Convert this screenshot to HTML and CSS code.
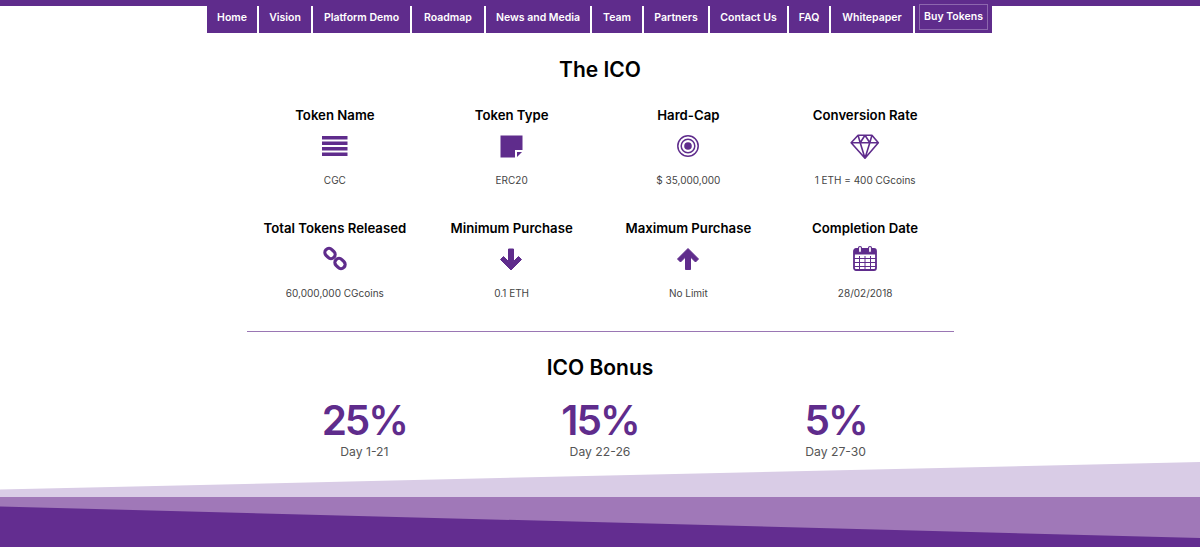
FILE: index.html
```html
<!DOCTYPE html>
<html lang="en">
  <head>
    <meta charset="UTF-8" />
    <meta name="viewport" content="width=device-width, initial-scale=1.0" />
    <title>The ICO</title>
    <link rel="stylesheet" href="styles.css">
  </head>
  <body>
    <nav class="topbar">
      <ul class="menu">
        <li class="menu-item w-home"><a href="#">Home</a></li>
        <li class="menu-item w-vision"><a href="#">Vision</a></li>
        <li class="menu-item w-demo"><a href="#">Platform Demo</a></li>
        <li class="menu-item w-roadmap"><a href="#">Roadmap</a></li>
        <li class="menu-item w-news"><a href="#">News and Media</a></li>
        <li class="menu-item w-team"><a href="#">Team</a></li>
        <li class="menu-item w-partners"><a href="#">Partners</a></li>
        <li class="menu-item w-contact"><a href="#">Contact Us</a></li>
        <li class="menu-item w-faq"><a href="#">FAQ</a></li>
        <li class="menu-item w-paper"><a href="#">Whitepaper</a></li>
        <li class="menu-item w-buy"><a class="buy-btn" href="#">Buy Tokens</a></li>
      </ul>
    </nav>

    <main class="container">
      <h2 class="section-title">The ICO</h2>

      <div class="facts">
        <div class="fact">
          <h3>Token Name</h3>
          <svg class="fact-icon" viewBox="0 0 36 36">
            <path d="M5 8h25.5v3.6H5zM5 13.4h25.5V17H5zM5 18.9h25.5v3.6H5zM5 24.4h25.5V28H5z" fill="#5f2c8c" />
          </svg>
          <p>CGC</p>
        </div>
        <div class="fact">
          <h3>Token Type</h3>
          <svg class="fact-icon" viewBox="0 0 36 36">
            <path d="M6.5 7.5h22V22H21v7.5H6.5z" fill="#5f2c8c" />
            <path d="M23 24h5l-5 5z" fill="#5f2c8c" />
          </svg>
          <p>ERC20</p>
        </div>
        <div class="fact">
          <h3>Hard-Cap</h3>
          <svg class="fact-icon" viewBox="0 0 36 36">
            <circle cx="18" cy="18" r="10.2" fill="none" stroke="#5f2c8c" stroke-width="1.5" />
            <circle cx="18" cy="18" r="6.8" fill="none" stroke="#5f2c8c" stroke-width="1.5" />
            <circle cx="18" cy="18" r="3.8" fill="#5f2c8c" />
          </svg>
          <p>$ 35,000,000</p>
        </div>
        <div class="fact">
          <h3>Conversion Rate</h3>
          <svg class="fact-icon fact-icon-wide" viewBox="0 0 30 26">
            <path d="M8.5 2h13l6 7L15 23.5 2 9zM2 9h26M10.5 9L15 23.5 19.5 9M8.500 2l2 7 4.500-7 4.500 7 2-7" fill="none" stroke="#5f2c8c" stroke-width="1.5" stroke-linejoin="round" />
          </svg>
          <p>1 ETH = 400 CGcoins</p>
        </div>
        <div class="fact">
          <h3>Total Tokens Released</h3>
          <svg class="fact-icon" viewBox="0 0 36 36">
            <g fill="none" stroke="#5f2c8c" stroke-width="3.2">
              <rect x="7.5" y="8.4" width="11" height="8.2" rx="4" transform="rotate(45 13 12.5)" />
              <rect x="17.5" y="18.4" width="11" height="8.2" rx="4" transform="rotate(45 23 22.5)" />
            </g>
          </svg>
          <p>60,000,000 CGcoins</p>
        </div>
        <div class="fact">
          <h3>Minimum Purchase</h3>
          <svg class="fact-icon" viewBox="0 0 36 36">
            <path d="M17 29L6.5 18.5l3-3 5 5V8h5v12.5l5-5 3 3z" fill="#5f2c8c" stroke="#5f2c8c" stroke-linejoin="round" />
          </svg>
          <p>0.1 ETH</p>
        </div>
        <div class="fact">
          <h3>Maximum Purchase</h3>
          <svg class="fact-icon" viewBox="0 0 36 36">
            <path d="M18 7.5L28.500 18l-3 3-5-5v12.500h-5V16l-5 5-3-3z" fill="#5f2c8c" stroke="#5f2c8c" stroke-linejoin="round" />
          </svg>
          <p>No Limit</p>
        </div>
        <div class="fact">
          <h3>Completion Date</h3>
          <svg class="fact-icon" viewBox="0 0 36 36">
            <g fill="none" stroke="#5f2c8c">
              <rect x="7" y="8" width="22" height="21" rx="2" stroke-width="1.8" />
              <path d="M7 11h22" stroke-width="5" />
              <path d="M7 17.5h22M7 21.5h22M7 25.5h22M12.5 15v13M18 15v13M23.5 15v13" stroke-width="1" />
              <rect x="11.5" y="5.5" width="3" height="6" rx="1.5" fill="#fff" stroke-width="1.2" />
              <rect x="21.5" y="5.5" width="3" height="6" rx="1.5" fill="#fff" stroke-width="1.2" />
            </g>
          </svg>
          <p>28/02/2018</p>
        </div>
      </div>

      <hr class="divider" />

      <h2 class="section-title">ICO Bonus</h2>

      <div class="bonus">
        <div class="bonus-item">
          <div class="bonus-value">25%</div>
          <div class="bonus-label">Day 1-21</div>
        </div>
        <div class="bonus-item">
          <div class="bonus-value">15%</div>
          <div class="bonus-label">Day 22-26</div>
        </div>
        <div class="bonus-item">
          <div class="bonus-value">5%</div>
          <div class="bonus-label">Day 27-30</div>
        </div>
      </div>
    </main>

    <svg class="wave" viewBox="0 0 1200 85" preserveAspectRatio="none">
      <path d="M0 27.5L1200 0v35H0z" fill="#d9cce6" />
      <path d="M0 35h1200v50H0z" fill="#a078b8" />
      <path d="M0 44.5L1200 76v9H0z" fill="#632d90" />
    </svg>
  </body>
</html>
```

FILE: styles.css
```css
* {
  margin: 0;
  padding: 0;
  box-sizing: border-box;
}

body {
  font-family: Inter, "Open Sans", Arial, sans-serif;
  background: #fff;
  color: #000;
  overflow: hidden;
}

.topbar {
  background: linear-gradient(#5f2c8c 6px, #fff 6px);
  height: 34px;
  display: flex;
  justify-content: center;
}

.menu {
  display: flex;
  gap: 2px;
  list-style: none;
  margin-left: -1px;
}

.menu-item {
  height: 33px;
  padding: 6px 0 5px;
  background: #5f2c8c;
  display: flex;
  align-items: center;
  justify-content: center;
}

.menu-item a {
  color: #fff;
  font-size: 10.5px;
  font-weight: 600;
  text-decoration: none;
  white-space: nowrap;
}

.w-home { width: 50px; }
.w-vision { width: 52px; }
.w-demo { width: 97px; }
.w-roadmap { width: 72px; }
.w-news { width: 104px; }
.w-team { width: 50px; }
.w-partners { width: 64px; }
.w-contact { width: 77px; }
.w-faq { width: 40px; }
.w-paper { width: 82px; }
.w-buy { width: 77px; }

.menu-item .buy-btn {
  border: 1px solid #8d67ae;
  padding: 0 4px;
  line-height: 24px;
}

.container {
  width: 707px;
  margin: 0 auto;
  height: 428px;
}

.section-title {
  font-size: 21px;
  font-weight: 600;
  text-align: center;
  line-height: 28px;
  padding-top: 22px;
  height: 50px;
}

.facts {
  display: grid;
  grid-template-columns: repeat(4, 1fr);
  row-gap: 27px;
  margin-top: 21px;
}

.fact {
  display: flex;
  flex-direction: column;
  align-items: center;
  height: 86px;
}

.fact h3 {
  font-size: 13.2px;
  font-weight: 600;
  line-height: 20px;
  white-space: nowrap;
}

.fact-icon {
  width: 36px;
  height: 36px;
  margin-top: 3px;
}

.fact-icon-wide {
  width: 32px;
  height: 28px;
  margin-top: 8px;
  margin-bottom: 3px;
}

.fact p {
  font-size: 10px;
  color: #444;
  line-height: 16px;
  margin-top: 8px;
}

.divider {
  border: 0;
  border-top: 1px solid #9a76b4;
  margin-top: 27px;
}

.bonus {
  display: grid;
  grid-template-columns: repeat(3, 1fr);
  margin-top: 21px;
}

.bonus-item {
  text-align: center;
}

.bonus-value {
  color: #5f2c8c;
  font-size: 40.5px;
  font-weight: 600;
  letter-spacing: -2px;
  line-height: 36px;
}

.bonus-label {
  font-size: 12.2px;
  color: #555;
  line-height: 16px;
  margin-top: 5px;
}

.wave {
  display: block;
  width: 100%;
  height: 85px;
}
```
